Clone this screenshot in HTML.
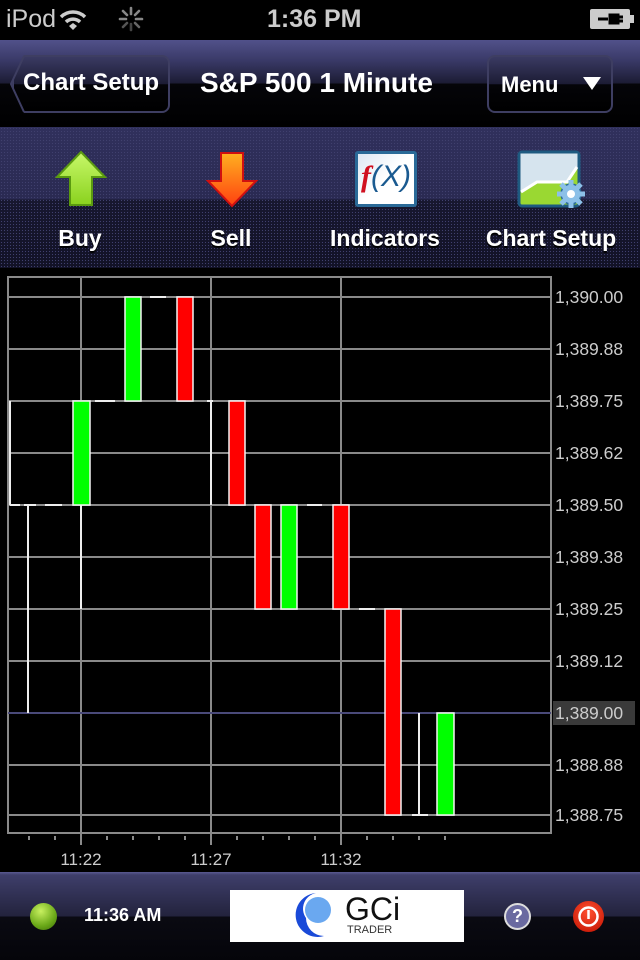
<!DOCTYPE html>
<html><head><meta charset="utf-8"><style>
*{margin:0;padding:0;box-sizing:border-box}
body{width:640px;height:960px;background:#000;font-family:"Liberation Sans",sans-serif;position:relative;overflow:hidden;color:#fff}
.abs{position:absolute}
.sb{top:0;left:0;width:640px;height:40px;background:#000;color:#ccc;font-size:25px}
.nav{top:40px;left:0;width:640px;height:87px;background:linear-gradient(#51518a 0px,#3a3a68 20px,#1c1c34 43px,#050509 44px,#000 87px)}
.btn{border:2px solid #3e3e62;border-radius:8px;background:linear-gradient(#3a3a62,#1c1c34 50%,#040408 51%,#000);font-weight:bold;font-size:23px;color:#fff;text-shadow:0 -1px 1px #000}
.tb{top:127px;left:0;width:640px;height:141px;background-image:radial-gradient(#40406e 0.6px,transparent 0.8px),linear-gradient(#30305c 0px,#2a2a52 72px,#17172f 73px,#121226 141px);background-size:3px 3px,100% 100%}
.lbl{font-weight:bold;font-size:23px;top:225px;text-align:center;text-shadow:0 2px 1px #000}
.bb{top:872px;left:0;width:640px;height:88px;background:linear-gradient(#5a5a92 0px,#3e3e6a 3px,#23233d 44px,#0a0a12 45px,#05050a 88px)}
</style></head><body>
<div class="abs sb">
<div class="abs" style="left:6px;top:5px">iPod</div>
<svg class="abs" style="left:58px;top:8px" width="30" height="24" viewBox="0 0 30 24"><path d="M3 9a17 17 0 0 1 24 0" stroke="#ccc" stroke-width="3.5" fill="none"/><path d="M8 14a10 10 0 0 1 14 0" stroke="#ccc" stroke-width="3.5" fill="none"/><path d="M11 18l4-3 4 3-4 4z" fill="#ccc"/></svg>
<svg class="abs" style="left:118px;top:6px" width="26" height="26" viewBox="-13 -13 26 26" stroke-width="2.6" stroke-linecap="round"><g stroke="#888"><line x1="0" y1="-5" x2="0" y2="-11"/><line x1="0" y1="5" x2="0" y2="11" stroke="#444"/><line x1="5" y1="0" x2="11" y2="0"/><line x1="-5" y1="0" x2="-11" y2="0"/><line x1="4" y1="-4" x2="8" y2="-8"/><line x1="-4" y1="4" x2="-8" y2="8" stroke="#555"/><line x1="4" y1="4" x2="8" y2="8" stroke="#666"/><line x1="-4" y1="-4" x2="-8" y2="-8"/></g></svg>
<div class="abs" style="left:267px;top:5px;font-weight:bold">1:36 PM</div>
<svg class="abs" style="left:590px;top:9px" width="46" height="22"><rect x="0" y="0" width="40" height="20" rx="2" fill="#ccc"/><rect x="40" y="6" width="4" height="8" fill="#ccc"/><path d="M8 10h10M20 6h8v8h-8zM28 8h5M28 12h5" stroke="#000" stroke-width="3"/></svg>
</div>
<div class="abs nav"></div>
<div class="abs btn" style="left:12px;top:55px;width:158px;height:58px;clip-path:polygon(12px 0,100% 0,100% 100%,12px 100%,0 50%)"></div>
<svg class="abs" style="left:10px;top:55px" width="30" height="58"><path d="M14 1L1 29 14 57" stroke="#3e3e62" stroke-width="2" fill="none"/></svg>
<div class="abs" style="left:23px;top:69px;font-weight:bold;font-size:24px">Chart Setup</div>
<div class="abs" style="left:200px;top:67px;font-weight:bold;font-size:28px">S&amp;P 500 1 Minute</div>
<div class="abs btn" style="left:487px;top:55px;width:126px;height:58px"></div>
<div class="abs" style="left:501px;top:72px;font-weight:bold;font-size:22px">Menu</div>
<div class="abs" style="left:583px;top:77px;width:0;height:0;border-left:9px solid transparent;border-right:9px solid transparent;border-top:13px solid #fff"></div>
<div class="abs tb"></div>
<svg class="abs" style="left:54px;top:150px" width="54" height="58"><defs><linearGradient id="g1" x1="0" x2="0" y1="0" y2="1"><stop offset="0" stop-color="#c8f86a"/><stop offset="1" stop-color="#8ad21e"/></linearGradient><linearGradient id="r1" x1="0" x2="0" y1="0" y2="1"><stop offset="0" stop-color="#ffb020"/><stop offset="1" stop-color="#ff4010"/></linearGradient></defs><path d="M27 2L3 27h13v28h22V27h13z" fill="url(#g1)" stroke="#5a9a10" stroke-width="2"/></svg>
<svg class="abs" style="left:205px;top:150px" width="54" height="58"><path d="M27 56L3 31h13V3h22v28h13z" fill="url(#r1)" stroke="#d01010" stroke-width="2"/></svg>
<div class="abs" style="left:355px;top:151px;width:62px;height:56px;background:linear-gradient(135deg,#dde8f4,#fff 50%);border:3px solid #2a6a98;border-radius:3px"></div>
<div class="abs" style="left:361px;top:160px;font-size:30px;font-style:italic;font-family:'Liberation Serif',serif"><span style="color:#d01020;font-weight:bold">f</span><span style="color:#1a5a90;font-family:'Liberation Sans',sans-serif">(X)</span></div>
<svg class="abs" style="left:517px;top:150px" width="72" height="62"><rect x="2" y="2" width="60" height="54" rx="3" fill="#9ad832" stroke="#1e5a80" stroke-width="3"/><path d="M3.5 3.5h57v14l-10 14h-30l-17 10z" fill="#d6e4ee"/><path d="M4 42l16-10h30l10-15" stroke="#fff" stroke-width="3" fill="none"/><g transform="translate(54,44)"><circle r="10" fill="#8cc0e8" stroke="#2a6a98" stroke-width="1.5"/><g stroke="#8cc0e8" stroke-width="5"><line x1="0" y1="-14" x2="0" y2="14"/><line x1="-14" y1="0" x2="14" y2="0"/><line x1="-10" y1="-10" x2="10" y2="10"/><line x1="-10" y1="10" x2="10" y2="-10"/></g><circle r="4" fill="#fff"/></g></svg>
<div class="abs lbl" style="left:30px;width:100px">Buy</div>
<div class="abs lbl" style="left:181px;width:100px">Sell</div>
<div class="abs lbl" style="left:320px;width:130px">Indicators</div>
<div class="abs lbl" style="left:476px;width:150px">Chart Setup</div>
<svg class="abs" style="left:0;top:268px" width="640" height="604" viewBox="0 268 640 604" font-family="Liberation Sans" font-size="17.5" fill="#ccc">
<g stroke="#8a8a8a" stroke-width="2" fill="none">
<rect x="8" y="277" width="543" height="556"/>
<path d="M8 297H551M8 349H551M8 401H551M8 453H551M8 505H551M8 557H551M8 609H551M8 661H551M8 765H551M8 815H551"/>
<path d="M81 277V845M211 277V845M341 277V845"/>
<path d="M29 836v4M55 836v4M107 836v4M133 836v4M159 836v4M185 836v4M237 836v4M263 836v4M289 836v4M315 836v4M367 836v4M393 836v4M419 836v4M445 836v4"/>
</g>
<path d="M8 713H551" stroke="#4a4a7a" stroke-width="2"/>
<g stroke="#eee" stroke-width="2" fill="none">
<path d="M10 401V505M10 505H20M28 505V713M24 505H36M45 505H62M81 505V609M95 401H115M150 297H166M207 401H213M211 401V505M307 505H322M359 609H375M419 713V815M412 815H428"/>
</g>
<g stroke="#f4f4f4" stroke-width="1.5">
<rect x="73" y="401" width="17" height="104" fill="#00ff00"/>
<rect x="125" y="297" width="16" height="104" fill="#00ff00"/>
<rect x="177" y="297" width="16" height="104" fill="#ff0000"/>
<rect x="229" y="401" width="16" height="104" fill="#ff0000"/>
<rect x="255" y="505" width="16" height="104" fill="#ff0000"/>
<rect x="281" y="505" width="16" height="104" fill="#00ff00"/>
<rect x="333" y="505" width="16" height="104" fill="#ff0000"/>
<rect x="385" y="609" width="16" height="206" fill="#ff0000"/>
<rect x="437" y="713" width="17" height="102" fill="#00ff00"/>
</g>
<rect x="553" y="701" width="82" height="24" fill="#3a3a3a"/>
<text x="555" y="303">1,390.00</text><text x="555" y="355">1,389.88</text><text x="555" y="407">1,389.75</text><text x="555" y="459">1,389.62</text><text x="555" y="511">1,389.50</text><text x="555" y="563">1,389.38</text><text x="555" y="615">1,389.25</text><text x="555" y="667">1,389.12</text><text x="555" y="719">1,389.00</text><text x="555" y="771">1,388.88</text><text x="555" y="821">1,388.75</text>
<text x="81" y="865" text-anchor="middle" font-size="17">11:22</text><text x="211" y="865" text-anchor="middle" font-size="17">11:27</text><text x="341" y="865" text-anchor="middle" font-size="17">11:32</text>
</svg>
<div class="abs bb"></div>
<div class="abs" style="left:30px;top:903px;width:27px;height:27px;border-radius:50%;background:radial-gradient(circle at 40% 30%,#c8f060,#6aa818 60%,#3a6a08)"></div>
<div class="abs" style="left:84px;top:905px;font-weight:bold;font-size:18px">11:36 AM</div>
<div class="abs" style="left:230px;top:890px;width:234px;height:52px;background:#fff"></div>
<svg class="abs" style="left:286px;top:890px" width="60" height="52"><path d="M30 3A22 22 0 1 0 38 46 18 18 0 0 1 20 28 16 16 0 0 1 30 3z" fill="#1a4ad8"/><circle cx="32" cy="20" r="13" fill="#6aa8f0"/></svg>
<div class="abs" style="left:345px;top:891px;color:#111;font-size:32px">GCi</div>
<div class="abs" style="left:347px;top:924px;color:#333;font-size:11px">TRADER</div>
<div class="abs" style="left:504px;top:903px;width:27px;height:27px;border-radius:50%;background:#6a6aa0;border:2px solid #ddd;color:#fff;font-weight:bold;font-size:18px;text-align:center;line-height:23px">?</div>
<div class="abs" style="left:573px;top:901px;width:31px;height:31px;border-radius:50%;background:radial-gradient(circle at 50% 35%,#ff5030,#c01000)"></div>
<svg class="abs" style="left:573px;top:901px" width="31" height="31"><circle cx="15.5" cy="15.5" r="9" stroke="#fff" stroke-width="2.5" fill="none"/><line x1="15.5" y1="9" x2="15.5" y2="18" stroke="#fff" stroke-width="2.5"/></svg>
</body></html>
